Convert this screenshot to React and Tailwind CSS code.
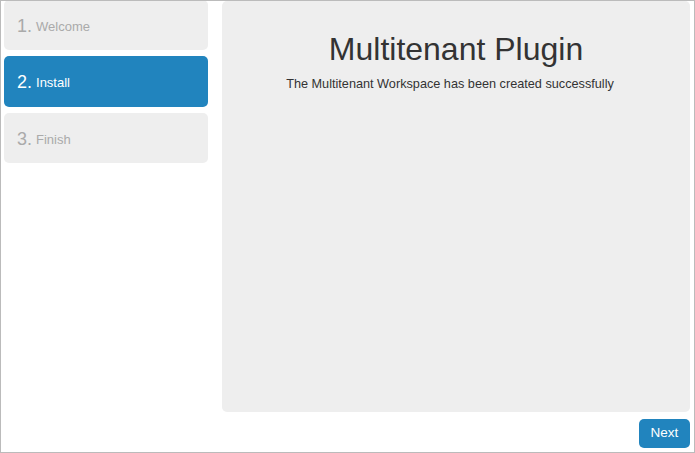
export default function App() {
  const font = { fontFamily: '"Liberation Sans", Arial, sans-serif' };
  return (
    <div
      className="w-[695px] h-[453px] border border-[#bbbbbb] bg-white overflow-hidden flex flex-col"
      style={font}
    >
      <div className="flex flex-row h-[411px]">
        <div className="w-[204px] ml-[3px] flex flex-col gap-[6px] -mt-px">
          <div className="h-[50px] rounded-[5px] bg-[#eeeeee] text-[#aaaaaa] flex items-center pl-[13px] pt-[3px]">
            <span className="text-[18px] mr-[4px]">1.</span>
            <span className="text-[13px]">Welcome</span>
          </div>
          <div className="h-[51px] rounded-[5px] bg-[#2184be] text-white flex items-center pl-[13px] pt-[2px]">
            <span className="text-[18px] mr-[4px]">2.</span>
            <span className="text-[13px]">Install</span>
          </div>
          <div className="h-[50px] rounded-[5px] bg-[#eeeeee] text-[#aaaaaa] flex items-center pl-[13px] pt-[3px]">
            <span className="text-[18px] mr-[4px]">3.</span>
            <span className="text-[13px]">Finish</span>
          </div>
        </div>
        <div className="ml-[14px] w-[468px] h-[411px] rounded-[5px] bg-[#eeeeee] text-[#333333] flex flex-col items-center pt-[30px]">
          <h1 className="text-[32px] leading-[36px] font-normal">Multitenant Plugin</h1>
          <p className="text-[12.7px] leading-[17px] mt-[9px] mr-[12px]">
            The Multitenant Workspace has been created successfully
          </p>
        </div>
      </div>
      <div className="flex justify-end pr-[4px] pt-[7px]">
        <button className="h-[29px] w-[51px] rounded-[5px] bg-[#2184be] text-white text-[13.5px]">
          Next
        </button>
      </div>
    </div>
  );
}
